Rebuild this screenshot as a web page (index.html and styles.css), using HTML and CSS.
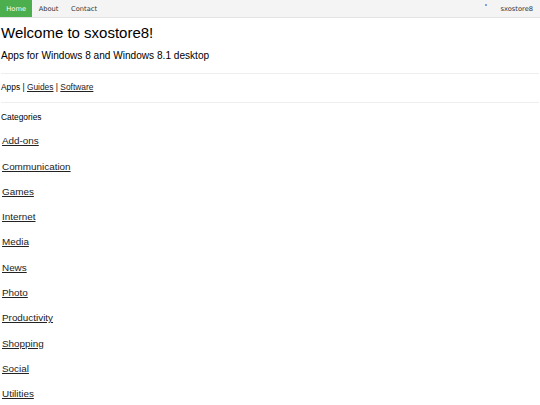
FILE: index.html
```html
<!DOCTYPE html>
<html>
<head>
<meta charset="utf-8">
<title>sxostore8</title>
<link rel="stylesheet" href="styles.css">
</head>
<body>
<nav class="navbar">
  <ul class="nav">
    <li><a class="active" href="#">Home</a></li>
    <li><a href="#">About</a></li>
    <li><a href="#">Contact</a></li>
  </ul>
  <div class="nav-right">
    <span class="dot"></span>
    <a href="#" class="brand">sxostore8</a>
  </div>
</nav>
<main class="content">
  <h1 class="title">Welcome to sxostore8!</h1>
  <p class="lead">Apps for Windows 8 and Windows 8.1 desktop</p>
  <div class="sections">Apps | <a href="#">Guides</a> | <a href="#">Software</a></div>
  <div class="cat-head">Categories</div>
  <ul class="cats">
    <li><a href="#">Add-ons</a></li>
    <li><a href="#">Communication</a></li>
    <li><a href="#">Games</a></li>
    <li><a href="#">Internet</a></li>
    <li><a href="#">Media</a></li>
    <li><a href="#">News</a></li>
    <li><a href="#">Photo</a></li>
    <li><a href="#">Productivity</a></li>
    <li><a href="#">Shopping</a></li>
    <li><a href="#">Social</a></li>
    <li><a href="#">Utilities</a></li>
  </ul>
</main>
</body>
</html>
```
FILE: styles.css
```css
html, body {
  margin: 0;
  padding: 0;
  background: #fff;
  color: #000;
  font-family: "Liberation Sans", Arial, sans-serif;
}
.navbar {
  display: flex;
  justify-content: space-between;
  align-items: stretch;
  height: 17px;
  background: #f4f4f4;
  border-bottom: 1px solid #e4e4e4;
  font-family: "DejaVu Sans", Verdana, sans-serif;
  font-size: 6.7px;
}
.nav {
  display: flex;
  list-style: none;
  margin: 0;
  padding: 0;
}
.nav li { display: flex; }
.nav a {
  display: flex;
  align-items: center;
  height: 100%;
  padding: 0 6.3px;
  color: #333;
  text-decoration: none;
}
.nav a.active {
  background: #4cae4c;
  color: #fff;
}
.nav-right {
  display: flex;
  align-items: center;
  padding-right: 7px;
}
.dot {
  width: 2px;
  height: 2px;
  background: #7fa6dc;
  align-self: flex-start;
  margin-top: 4px;
  margin-right: 13.5px;
}
.brand {
  color: #333;
  text-decoration: none;
}
.content {
  padding: 0 1px;
}
.title {
  font-size: 15px;
  font-weight: normal;
  margin: 6px 0 0;
  line-height: 18px;
}
.lead {
  font-size: 10.1px;
  margin: 7px 0 0;
  line-height: 13px;
  padding-bottom: 11px;
  border-bottom: 1px solid #eee;
}
.sections {
  font-size: 8.4px;
  line-height: 12px;
  padding: 7px 0 9px;
  border-bottom: 1px solid #eee;
}
.sections a, .cats a {
  color: #222;
}
.cat-head {
  font-size: 8.4px;
  line-height: 12px;
  margin-top: 8px;
}
.cats {
  list-style: none;
  margin: 0;
  padding: 0 0 0 1px;
}
.cats li {
  font-size: 9.9px;
  line-height: 14px;
  margin-top: 11.3px;
}
```
